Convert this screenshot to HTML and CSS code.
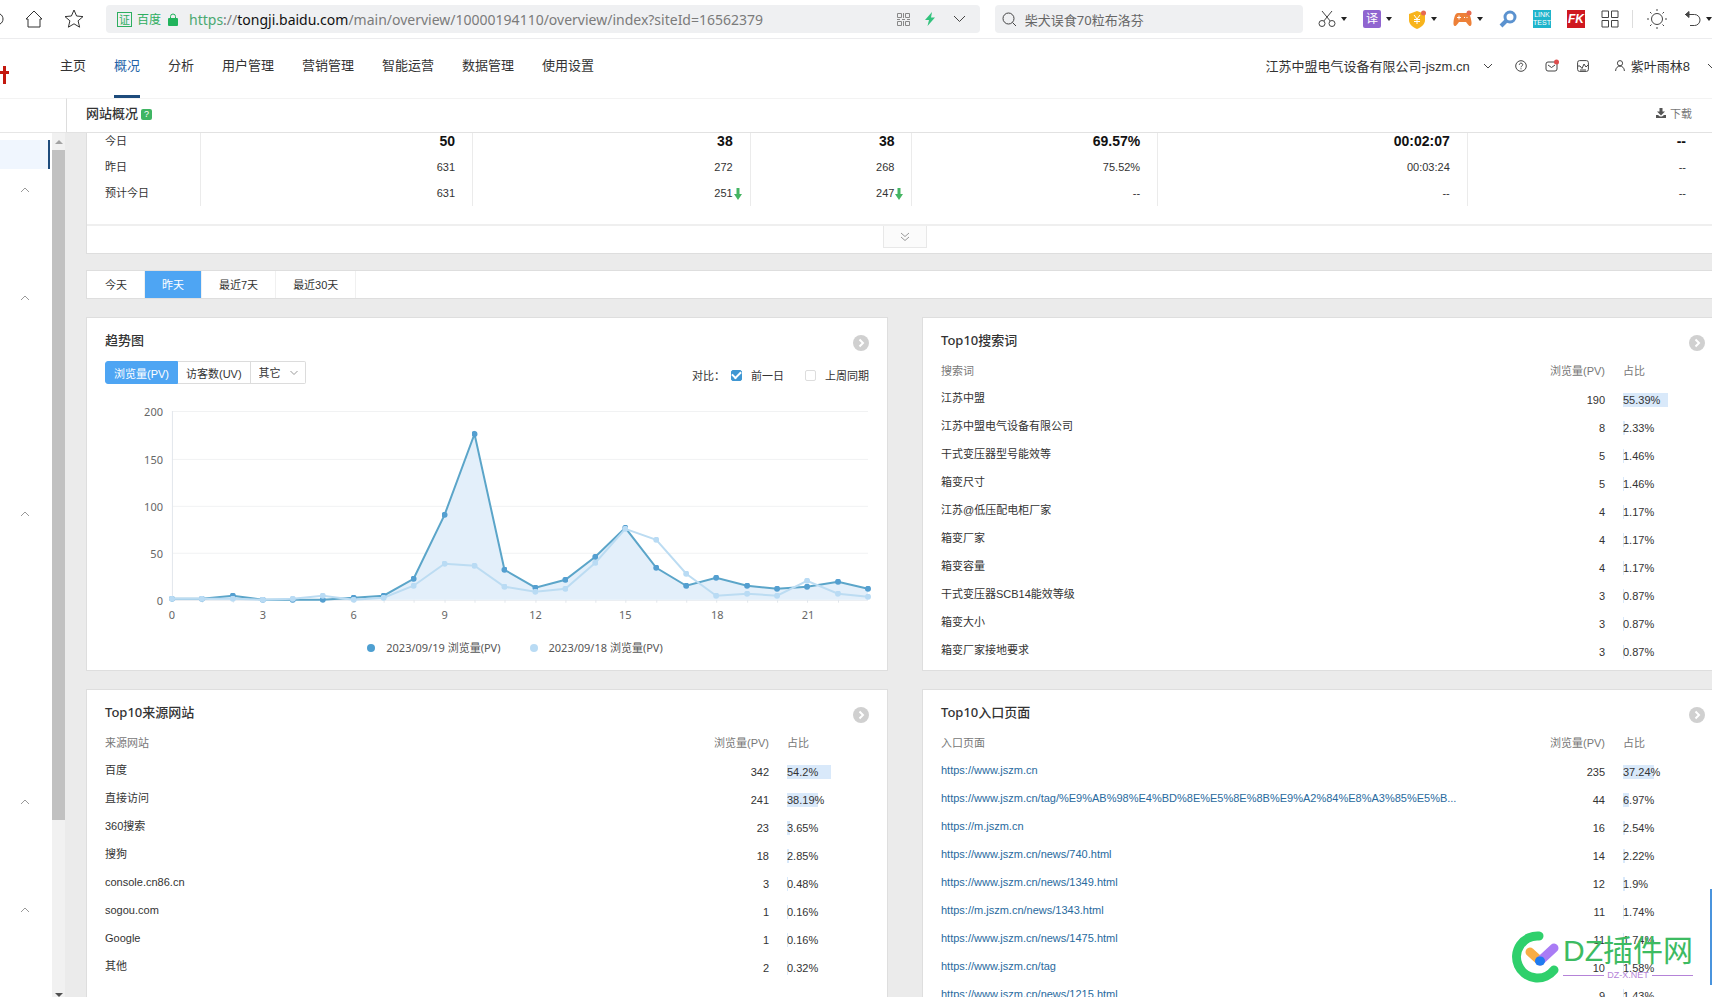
FILE: index.html
```html
<!DOCTYPE html>
<html lang="zh-CN">

<head>
    <meta charset="UTF-8">
    <meta name="viewport" content="width=device-width, initial-scale=1.0">
    <title>网站概况</title>
    <link rel="stylesheet" href="styles.css">
</head>

<body>
    <!-- Browser bar -->
    <div class="toolbar">
        <svg class="reload" width="4" height="18" viewBox="0 0 4 18"><path d="M0 4c2 1 3 3 3 5s-1 4-3 5" /></svg>
        <button class="icon-btn" aria-label="首页"><svg width="18" height="18" viewBox="0 0 18 18"><path d="M1 9L9 1l8 8h-2v8H3V9z" /></svg></button>
        <button class="icon-btn" aria-label="收藏"><svg width="20" height="20" viewBox="0 0 20 20"><path d="M10 1l2.600 6 6.400.6-4.900 4.200 1.500 6.400L10 14.800 4.400 18.200l1.500-6.400L1 7.600 7.400 7z" /></svg></button>
        <div class="address">
            <span class="cert">证</span>
            <span class="site">百度</span>
            <svg class="lock" width="10" height="13" viewBox="0 0 10 13"><rect y="5" width="10" height="8" rx="1" /><path d="M2.500 6V3.500a2.500 2.500 0 0 1 5 0V6" /></svg>
            <span class="url"><span class="scheme">https</span>://<b>tongji.baidu.com</b>/main/overview/10000194110/overview/index?siteId=16562379</span>
            <svg class="qr" width="13" height="13" viewBox="0 0 13 13"><path d="M.5.5h4v4h-4zM8.500.5h4v4h-4zM.5 8.500h4v4h-4zM8.500 8.500h4v4h-4zM6.500 0v5M6.500 8v5M0 6.500h3M5 6.500h3M10 6.500h3" /></svg>
            <svg class="bolt" width="10" height="14" viewBox="0 0 10 14"><path d="M7 0L0 8h4l-1.500 6L10 5.500H6z" /></svg>
            <svg class="line" width="13" height="8" viewBox="0 0 13 8"><path d="M1 1l5.500 5.500L12 1" /></svg>
        </div>
        <div class="search">
            <svg class="line" width="15" height="15" viewBox="0 0 15 15"><circle cx="6.500" cy="6.500" r="5.500" /><path d="M10.500 10.500L14 14" /></svg>
            <input type="text" value="柴犬误食70粒布洛芬" aria-label="搜索">
        </div>
        <div class="tools">
            <button class="tool" aria-label="截图"><svg class="line" width="18" height="18" viewBox="0 0 18 18"><circle cx="4" cy="13.500" r="3" /><circle cx="14" cy="13.500" r="3" /><path d="M4 1l8.200 10M14 1L5.800 11" /></svg><i class="caret"></i></button>
            <button class="tool" aria-label="翻译"><span class="translate">译</span><i class="caret"></i></button>
            <button class="tool" aria-label="钱包"><svg width="18" height="19" viewBox="0 0 18 19"><path fill="#f8b41c" d="M9 1l8 3v6c0 4-3 7-8 9-5-2-8-5-8-9V4z" /><path fill="none" stroke="#fff" d="M6 5l3 4 3-4M9 9v5M6 9.500h6M6 11.500h6" /><circle cx="15.500" cy="3" r="2.500" fill="#e66a50" /></svg><i class="caret"></i></button>
            <button class="tool" aria-label="游戏"><svg width="19" height="18" viewBox="0 0 19 18"><path fill="#ed8038" d="M5 3h9c3 0 4 5 4.500 9 .5 5-2 5-4 2l-1.500-2H6l-1.500 2c-2 3-4.500 3-4-2C1 8 2 3 5 3z" /><path stroke="#fff" d="M4 7.500h4M6 5.500v4M11 7.500h1M13.500 7.500h1" /><circle cx="16" cy="3" r="2.500" fill="#e66a50" /></svg><i class="caret"></i></button>
            <button class="tool" aria-label="查找"><svg width="18" height="18" viewBox="0 0 18 18"><g fill="none" stroke="#5b92cf"><circle cx="11" cy="7" r="5" stroke-width="3" /><path d="M7 11l-5 5" stroke-width="4" /></g></svg></button>
            <button class="tool" aria-label="LINK TEST"><span class="linktest">LINK<br>TEST</span></button>
            <button class="tool" aria-label="FK"><span class="fk">FK</span></button>
            <button class="tool" aria-label="应用"><svg class="line" width="18" height="18" viewBox="0 0 18 18"><path d="M1 1h6.500v6.500H1zM10.500 1H17v6.500h-6.500zM1 10.500h6.500V17H1zM10.500 10.500H17V17h-6.500z" /></svg></button>
            <i class="divider"></i>
            <button class="tool" aria-label="亮度"><svg class="line" width="22" height="20" viewBox="0 0 22 20"><circle cx="11" cy="10" r="5.500" /><path d="M11 0v2M11 18v2M1 10h2M19 10h2M4 3l1.500 1.500M16.500 15.500L18 17M18 3l-1.500 1.500M5.500 15.500L4 17" /></svg></button>
            <button class="tool" aria-label="撤销"><svg class="line" width="17" height="16" viewBox="0 0 17 16"><path d="M1 3.500h9.500a5.500 5.500 0 0 1 0 11H6" /><path fill="#444" d="M5 .5L1.500 3.500 5 6.500z" /></svg><i class="caret"></i></button>
        </div>
    </div>

    <!-- Site header -->
    <header class="header">
        <svg class="logo" width="9" height="20" viewBox="0 0 9 20"><path d="M4.500 1v18M0 7.500h9" /></svg>
        <nav class="nav">
            <a href="#">主页</a>
            <a href="#" class="active">概况</a>
            <a href="#">分析</a>
            <a href="#">用户管理</a>
            <a href="#">营销管理</a>
            <a href="#">智能运营</a>
            <a href="#">数据管理</a>
            <a href="#">使用设置</a>
        </nav>
        <div class="account">
            <button class="company">江苏中盟电气设备有限公司-jszm.cn
                <svg class="line" width="10" height="6" viewBox="0 0 10 6"><path d="M1 1l4 4 4-4" /></svg>
            </button>
            <button aria-label="帮助"><svg class="line" width="12" height="12" viewBox="0 0 12 12"><circle cx="6" cy="6" r="5.300" /><path d="M4.300 4.800c0-2.300 3.400-2.200 3.400-.1C7.700 6 6 6 6 7.300M6 8.300v1" /></svg></button>
            <button aria-label="消息"><svg class="line" width="14" height="14" viewBox="0 0 14 14"><rect x="1" y="3" width="11" height="9" rx="2" /><path d="M3 6l3.500 2.500L10 6" /><circle cx="11.500" cy="3" r="2.500" class="dot" /></svg></button>
            <button aria-label="报告"><svg class="line" width="12" height="12" viewBox="0 0 12 12"><rect x=".6" y=".6" width="10.800" height="10.800" rx="2" /><path d="M1 6h2l2 2.500L7 4l2 3 2-2M3 10h6" /></svg></button>
            <button class="user">
                <svg class="line" width="10" height="11" viewBox="0 0 10 11"><circle cx="5" cy="3.200" r="2.600" /><path d="M.6 11c0-6.500 8.800-6.500 8.800 0" /></svg>
                紫叶雨林8
            </button>
            <svg class="line" width="4" height="6" viewBox="0 0 4 6"><path d="M0 1l4 4" /></svg>
        </div>
    </header>

    <div class="layout">
        <aside class="sidebar">
            <div class="sidebar-top"></div>
            <div class="sidebar-body">
                <div class="menu">
                    <div class="menu-active"></div>
                    <button class="group items-2" aria-label="收起"><svg width="10" height="6" viewBox="0 0 10 6"><path d="M1 5l4-4 4 4" /></svg></button>
                    <button class="group items-5" aria-label="收起"><svg width="10" height="6" viewBox="0 0 10 6"><path d="M1 5l4-4 4 4" /></svg></button>
                    <button class="group items-7" aria-label="收起"><svg width="10" height="6" viewBox="0 0 10 6"><path d="M1 5l4-4 4 4" /></svg></button>
                    <button class="group items-2" aria-label="收起"><svg width="10" height="6" viewBox="0 0 10 6"><path d="M1 5l4-4 4 4" /></svg></button>
                    <button class="group" aria-label="收起"><svg width="10" height="6" viewBox="0 0 10 6"><path d="M1 5l4-4 4 4" /></svg></button>
                </div>
                <div class="scrollbar">
                    <i class="arrow-up"></i>
                    <div class="track"><div class="thumb"></div></div>
                    <i class="arrow-down"></i>
                </div>
            </div>
        </aside>

        <main class="main">
            <div class="page-head">
                <h1>网站概况</h1>
                <span class="help">?</span>
                <button class="download">
                    <svg width="10" height="10" viewBox="0 0 10 10"><path d="M3.500 0h3v3.500H9L5 7.500 1 3.500h2.500zM0 7h2l2 1.500h2L8 7h2v3H0z" /></svg>
                    下载
                </button>
            </div>

            <div class="content">
                <section class="card summary">
                    <table>
                        <colgroup>
                            <col class="c-label"><col class="c-pv"><col class="c-uv"><col class="c-ip"><col class="c-bounce"><col class="c-time"><col>
                        </colgroup>
                        <tr class="today">
                            <th>今日</th>
                            <td>50</td>
                            <td>38</td>
                            <td>38</td>
                            <td>69.57%</td>
                            <td>00:02:07</td>
                            <td>--</td>
                        </tr>
                        <tr>
                            <th>昨日</th>
                            <td>631</td>
                            <td>272</td>
                            <td>268</td>
                            <td>75.52%</td>
                            <td>00:03:24</td>
                            <td>--</td>
                        </tr>
                        <tr>
                            <th>预计今日</th>
                            <td>631</td>
                            <td class="down">251<svg width="8" height="12" viewBox="0 0 8 12"><path d="M2.500 0h3v6H8l-4 6-4-6h2.500z" /></svg></td>
                            <td class="down">247<svg width="8" height="12" viewBox="0 0 8 12"><path d="M2.500 0h3v6H8l-4 6-4-6h2.500z" /></svg></td>
                            <td>--</td>
                            <td>--</td>
                            <td>--</td>
                        </tr>
                    </table>
                    <div class="more">
                        <button aria-label="展开"><svg width="10" height="10" viewBox="0 0 10 10"><path d="M1 1l4 3.500L9 1M1 5l4 3.500L9 5" /></svg></button>
                    </div>
                </section>

                <div class="card range">
                    <button>今天</button>
                    <button class="active">昨天</button>
                    <button>最近7天</button>
                    <button>最近30天</button>
                </div>

                <div class="panels">
                    <section class="card panel">
                        <div class="panel-head">
                            <h2>趋势图</h2>
                            <a href="#" class="go" aria-label="更多"><svg width="16" height="16" viewBox="0 0 16 16"><circle cx="8" cy="8" r="8" /><path d="M6.500 4.500L10 8l-3.500 3.500" /></svg></a>
                        </div>
                        <div class="controls">
                            <div class="metrics">
                                <button class="active">浏览量(PV)</button>
                                <button>访客数(UV)</button>
                                <div class="select">
                                    <select aria-label="其它指标"><option>其它</option></select>
                                    <svg width="8" height="6" viewBox="0 0 8 6"><path d="M.5 1L4 4.500 7.500 1" /></svg>
                                </div>
                            </div>
                            <div class="compare">
                                <span>对比：</span>
                                <label><input type="checkbox" checked>前一日</label>
                                <label><input type="checkbox">上周同期</label>
                            </div>
                        </div>
                        <svg class="chart" viewBox="0 0 765 232">
                            <defs>
                                <marker id="dot-a" viewBox="0 0 6 6" refX="3" refY="3" markerWidth="6" markerHeight="6" markerUnits="userSpaceOnUse"><circle cx="3" cy="3" r="3" fill="#549fd0" /></marker>
                                <marker id="dot-b" viewBox="0 0 6 6" refX="3" refY="3" markerWidth="6" markerHeight="6" markerUnits="userSpaceOnUse"><circle cx="3" cy="3" r="3" fill="#b9dbf4" /></marker>
                            </defs>
                            <path class="grid" d="M67 20.500H764M67 68.500H764M67 115.500H764M67 162.500H764" />
                            <path class="axis" d="M67.500 20V209.500H764M97.500 209v3M128.500 209v3M158.500 209v3M188.500 209v3M218.500 209v3M249.500 209v3M279.500 209v3M309.500 209v3M340.500 209v3M370.500 209v3M400.500 209v3M431.500 209v3M461.500 209v3M491.500 209v3M521.500 209v3M552.500 209v3M582.500 209v3M612.500 209v3M643.500 209v3M673.500 209v3M703.500 209v3M734.500 209v3" />
                            <polygon class="area" points="67,209 67,208 97,208 128,205 158,209 188,209 218,209 249,207 279,205 309,188 340,124 370,43 400,179 431,197 461,189 491,166 521,137 552,177 582,195 612,187 643,195 673,198 703,196 734,191 764,198 764,209" />
                            <polyline class="series-a" points="67,208 97,208 128,205 158,209 188,209 218,209 249,207 279,205 309,188 340,124 370,43 400,179 431,197 461,189 491,166 521,137 552,177 582,195 612,187 643,195 673,198 703,196 734,191 764,198" />
                            <polyline class="series-b" points="67,208 97,208 128,208 158,209 188,208 218,205 249,209 279,207 309,195 340,173 370,175 400,196 431,201 461,198 491,172 521,138 552,149 582,183 612,205 643,203 673,205 703,190 734,203 764,206" />
                            <g class="y-labels">
                                <text x="58" y="25">200</text>
                                <text x="58" y="73">150</text>
                                <text x="58" y="120">100</text>
                                <text x="58" y="167">50</text>
                                <text x="58" y="214">0</text>
                            </g>
                            <g class="x-labels">
                                <text x="67" y="228">0</text>
                                <text x="158" y="228">3</text>
                                <text x="249" y="228">6</text>
                                <text x="340" y="228">9</text>
                                <text x="431" y="228">12</text>
                                <text x="521" y="228">15</text>
                                <text x="613" y="228">18</text>
                                <text x="704" y="228">21</text>
                            </g>
                        </svg>
                        <div class="legend">
                            <span class="key-a">2023/09/19 浏览量(PV)</span>
                            <span class="key-b">2023/09/18 浏览量(PV)</span>
                        </div>
                    </section>

                    <section class="card panel">
                        <div class="panel-head">
                            <h2>Top10搜索词</h2>
                            <a href="#" class="go" aria-label="更多"><svg width="16" height="16" viewBox="0 0 16 16"><circle cx="8" cy="8" r="8" /><path d="M6.500 4.500L10 8l-3.500 3.500" /></svg></a>
                        </div>
                        <table class="top">
                            <thead><tr><th>搜索词</th><th class="pv">浏览量(PV)</th><th class="rate">占比</th></tr></thead>
                            <tbody>
                                <tr><td>江苏中盟</td><td class="pv">190</td><td class="rate"><div class="bar" style="width:55.39%">55.39%</div></td></tr>
                                <tr><td>江苏中盟电气设备有限公司</td><td class="pv">8</td><td class="rate"><div class="bar" style="width:2.33%">2.33%</div></td></tr>
                                <tr><td>干式变压器型号能效等</td><td class="pv">5</td><td class="rate"><div class="bar" style="width:1.46%">1.46%</div></td></tr>
                                <tr><td>箱变尺寸</td><td class="pv">5</td><td class="rate"><div class="bar" style="width:1.46%">1.46%</div></td></tr>
                                <tr><td>江苏@低压配电柜厂家</td><td class="pv">4</td><td class="rate"><div class="bar" style="width:1.17%">1.17%</div></td></tr>
                                <tr><td>箱变厂家</td><td class="pv">4</td><td class="rate"><div class="bar" style="width:1.17%">1.17%</div></td></tr>
                                <tr><td>箱变容量</td><td class="pv">4</td><td class="rate"><div class="bar" style="width:1.17%">1.17%</div></td></tr>
                                <tr><td>干式变压器SCB14能效等级</td><td class="pv">3</td><td class="rate"><div class="bar" style="width:0.87%">0.87%</div></td></tr>
                                <tr><td>箱变大小</td><td class="pv">3</td><td class="rate"><div class="bar" style="width:0.87%">0.87%</div></td></tr>
                                <tr><td>箱变厂家接地要求</td><td class="pv">3</td><td class="rate"><div class="bar" style="width:0.87%">0.87%</div></td></tr>
                            </tbody>
                        </table>
                    </section>

                    <section class="card panel">
                        <div class="panel-head">
                            <h2>Top10来源网站</h2>
                            <a href="#" class="go" aria-label="更多"><svg width="16" height="16" viewBox="0 0 16 16"><circle cx="8" cy="8" r="8" /><path d="M6.500 4.500L10 8l-3.500 3.500" /></svg></a>
                        </div>
                        <table class="top">
                            <thead><tr><th>来源网站</th><th class="pv">浏览量(PV)</th><th class="rate">占比</th></tr></thead>
                            <tbody>
                                <tr><td>百度</td><td class="pv">342</td><td class="rate"><div class="bar" style="width:54.2%">54.2%</div></td></tr>
                                <tr><td>直接访问</td><td class="pv">241</td><td class="rate"><div class="bar" style="width:38.19%">38.19%</div></td></tr>
                                <tr><td>360搜索</td><td class="pv">23</td><td class="rate"><div class="bar" style="width:3.65%">3.65%</div></td></tr>
                                <tr><td>搜狗</td><td class="pv">18</td><td class="rate"><div class="bar" style="width:2.85%">2.85%</div></td></tr>
                                <tr><td>console.cn86.cn</td><td class="pv">3</td><td class="rate"><div class="bar" style="width:0.48%">0.48%</div></td></tr>
                                <tr><td>sogou.com</td><td class="pv">1</td><td class="rate"><div class="bar" style="width:0.16%">0.16%</div></td></tr>
                                <tr><td>Google</td><td class="pv">1</td><td class="rate"><div class="bar" style="width:0.16%">0.16%</div></td></tr>
                                <tr><td>其他</td><td class="pv">2</td><td class="rate"><div class="bar" style="width:0.32%">0.32%</div></td></tr>
                            </tbody>
                        </table>
                    </section>

                    <section class="card panel">
                        <div class="panel-head">
                            <h2>Top10入口页面</h2>
                            <a href="#" class="go" aria-label="更多"><svg width="16" height="16" viewBox="0 0 16 16"><circle cx="8" cy="8" r="8" /><path d="M6.500 4.500L10 8l-3.500 3.500" /></svg></a>
                        </div>
                        <table class="top">
                            <thead><tr><th>入口页面</th><th class="pv">浏览量(PV)</th><th class="rate">占比</th></tr></thead>
                            <tbody>
                                <tr><td><a href="#">https://www.jszm.cn</a></td><td class="pv">235</td><td class="rate"><div class="bar" style="width:37.24%">37.24%</div></td></tr>
                                <tr><td><a href="#">https://www.jszm.cn/tag/%E9%AB%98%E4%BD%8E%E5%8E%8B%E9%A2%84%E8%A3%85%E5%B...</a></td><td class="pv">44</td><td class="rate"><div class="bar" style="width:6.97%">6.97%</div></td></tr>
                                <tr><td><a href="#">https://m.jszm.cn</a></td><td class="pv">16</td><td class="rate"><div class="bar" style="width:2.54%">2.54%</div></td></tr>
                                <tr><td><a href="#">https://www.jszm.cn/news/740.html</a></td><td class="pv">14</td><td class="rate"><div class="bar" style="width:2.22%">2.22%</div></td></tr>
                                <tr><td><a href="#">https://www.jszm.cn/news/1349.html</a></td><td class="pv">12</td><td class="rate"><div class="bar" style="width:1.9%">1.9%</div></td></tr>
                                <tr><td><a href="#">https://m.jszm.cn/news/1343.html</a></td><td class="pv">11</td><td class="rate"><div class="bar" style="width:1.74%">1.74%</div></td></tr>
                                <tr><td><a href="#">https://www.jszm.cn/news/1475.html</a></td><td class="pv">11</td><td class="rate"><div class="bar" style="width:1.74%">1.74%</div></td></tr>
                                <tr><td><a href="#">https://www.jszm.cn/tag</a></td><td class="pv">10</td><td class="rate"><div class="bar" style="width:1.58%">1.58%</div></td></tr>
                                <tr><td><a href="#">https://www.jszm.cn/news/1215.html</a></td><td class="pv">9</td><td class="rate"><div class="bar" style="width:1.43%">1.43%</div></td></tr>
                            </tbody>
                        </table>
                    </section>
                </div>
            </div>
        </main>
    </div>

    <!-- Floating items -->
    <div class="side-tab"></div>
    <div class="watermark">
        <svg width="48" height="52" viewBox="0 0 48 52">
            <path d="M27 5A21 21 0 1 0 42 39" fill="none" stroke="#2fd06c" stroke-width="9" stroke-linecap="round" />
            <g fill="none" stroke-width="9" stroke-linecap="round">
                <path d="M18 21l10 9" stroke="#f8ad45" />
                <path d="M28 30l14-13" stroke="#a97cf5" />
                <path d="M27.500 30l1 0" stroke="#1f7bf0" />
            </g>
        </svg>
        <div class="watermark-text">
            <span class="watermark-name">DZ插件网</span>
            <span class="watermark-site">DZ-X.NET</span>
        </div>
    </div>
</body>

</html>
```
FILE: styles.css
```css
* {
    box-sizing: border-box;
}

body {
    margin: 0;
    height: 100vh;
    display: flex;
    flex-direction: column;
    overflow: hidden;
    position: relative;
    background: #fff;
    color: #333;
    font-family: "Liberation Sans", "Noto Sans CJK SC", sans-serif;
    font-size: 11px;
}

button, input, select {
    font: inherit;
    color: inherit;
    background: none;
    border: none;
    padding: 0;
    margin: 0;
}

a {
    color: inherit;
    text-decoration: none;
}

svg {
    display: block;
    flex: none;
}

.line {
    fill: none;
    stroke: #444;
}

/* Browser bar */
.toolbar {
    flex: none;
    display: flex;
    align-items: center;
    height: 39px;
    border-bottom: 1px solid #ececee;
}

.reload, .icon-btn svg {
    fill: none;
    stroke: #333;
}

.icon-btn {
    margin-left: 21px;
}

.address, .search {
    display: flex;
    align-items: center;
    height: 28px;
    background: #eff0f2;
    border-radius: 4px;
    font-family: "Noto Sans", "Noto Sans CJK SC", sans-serif;
    font-size: 13px;
}

.address {
    flex: 1;
    min-width: 0;
    margin: 0 15px 0 22px;
    padding: 0 14px 0 11px;
}

.cert {
    width: 15px;
    height: 15px;
    border: 1px solid #2dae5f;
    font-size: 11px;
    line-height: 13px;
    text-align: center;
    color: #2dae5f;
}

.site {
    margin: 0 7px 0 5px;
    font-size: 12px;
    color: #2dae5f;
}

.lock {
    fill: #21b35c;
}

.lock path {
    fill: none;
    stroke: #21b35c;
}

.url {
    flex: 1;
    min-width: 0;
    margin-left: 11px;
    overflow: hidden;
    white-space: nowrap;
    font-size: 14px;
    color: #7b7b7b;
}

.url b {
    font-weight: 400;
    color: #111;
}

.scheme {
    color: #4aa871;
}

.qr {
    fill: none;
    stroke: #888;
}

.bolt {
    margin: 0 18px 0 15px;
    fill: #32c27d;
}

.search {
    flex: 0 0 18%;
    padding: 0 7px;
    gap: 8px;
    color: #666;
}

.search input {
    flex: 1;
    min-width: 0;
}

.tools {
    flex: none;
    display: flex;
    align-items: center;
    gap: 16px;
    margin-left: 15px;
}

.tool {
    display: flex;
    align-items: center;
    gap: 5px;
}

.caret {
    border: 3px solid transparent;
    border-top: 4px solid #222;
    border-bottom: none;
}

.translate, .linktest, .fk {
    width: 18px;
    height: 18px;
    color: #fff;
    text-align: center;
}

.translate {
    border-radius: 2px;
    background: #9065d0;
    font-size: 12px;
    line-height: 18px;
}

.linktest {
    padding-top: 1px;
    background: #1fb4cb;
    font-size: 7px;
    line-height: 8px;
}

.fk {
    background: #cf1820;
    font-size: 12px;
    font-style: italic;
    font-weight: 700;
    line-height: 18px;
}

.divider {
    width: 1px;
    height: 18px;
    margin: 0 -3px;
    background: #ddd;
}

/* Site header */
.header {
    flex: none;
    display: flex;
    align-items: center;
    height: 59px;
    font-size: 13px;
}

.logo {
    margin-top: 12px;
    stroke: #c3190f;
    stroke-width: 3;
}

.nav {
    align-self: stretch;
    display: flex;
    gap: 28px;
    margin-left: 51px;
}

.nav a {
    padding-bottom: 1px;
    border-bottom: 3px solid transparent;
    line-height: 54px;
}

.nav .active {
    color: #2463a8;
    border-color: #1d4b7c;
}

.account {
    display: flex;
    align-items: center;
    gap: 18px;
    margin-left: auto;
    padding-bottom: 6px;
}

.account button {
    display: flex;
    align-items: center;
}

.account .company {
    gap: 13px;
    margin-right: 4px;
}

.account .user {
    gap: 6px;
    margin-left: 8px;
}

.account .dot {
    fill: #dd4c4c;
    stroke: none;
}

.layout {
    flex: 1;
    min-height: 0;
    display: flex;
}

/* Sidebar */
.sidebar {
    flex: none;
    width: 67px;
    display: flex;
    flex-direction: column;
    background: #fff;
}

.sidebar-top {
    height: 35px;
    border-top: 1px solid #f3f3f3;
    border-right: 1px solid #ddd;
    border-bottom: 1px solid #e6e6e6;
}

.sidebar-body {
    flex: 1;
    min-height: 0;
    display: flex;
    background: #ebebeb;
}

.menu {
    width: 52px;
    padding-top: 7px;
    overflow: hidden;
    background: #fff;
}

.menu-active {
    width: 50px;
    height: 29px;
    margin-bottom: 3px;
    background: #f0f6fe;
    border-right: 2px solid #1d4b7c;
}

.group {
    display: flex;
    align-items: center;
    justify-content: center;
    width: 50px;
    height: 36px;
}

.group svg {
    fill: none;
    stroke: #999;
}

/* Room for the folded-out items of a group */
.items-2 {
    margin-bottom: 72px;
}

.items-5 {
    margin-bottom: 180px;
}

.items-7 {
    margin-bottom: 252px;
}

.scrollbar {
    width: 13px;
    display: flex;
    flex-direction: column;
    align-items: center;
    background: #f1f1f1;
}

.track {
    flex: 1;
    width: 100%;
}

.thumb {
    height: 80%;
    background: #c1c1c1;
}

.arrow-up, .arrow-down {
    border: 4px solid transparent;
}

.arrow-up {
    margin: 7px 0 6px;
    border-top-width: 0;
    border-bottom: 4px solid #a3a3a3;
}

.arrow-down {
    margin-top: 6px;
    border-bottom-width: 0;
    border-top: 4px solid #505050;
}

/* Main area */
.main {
    flex: 1;
    min-width: 0;
    background: #ebebeb;
}

.page-head {
    display: flex;
    align-items: center;
    height: 35px;
    padding: 0 20px 6px 19px;
    background: #fff;
    border-top: 1px solid #f3f3f3;
    border-bottom: 1px solid #e2e2e2;
}

h1, h2 {
    margin: 0;
    font-family: "Noto Sans", "Noto Sans CJK SC", sans-serif;
    font-size: 13px;
    font-weight: 500;
    line-height: 20px;
}

.help {
    width: 11px;
    height: 11px;
    margin: 3px 0 0 3px;
    border-radius: 2px;
    background: #3fb563;
    color: #fff;
    font-size: 9px;
    line-height: 11px;
    text-align: center;
}

.download {
    display: flex;
    align-items: center;
    gap: 4px;
    margin-left: auto;
    color: #777;
}

.download svg {
    fill: #555;
}

/* The content runs a little past the right edge of the window */
.content {
    margin: 0 -12px 0 19px;
}

.card {
    background: #fff;
    border: 1px solid #dedede;
}

.summary {
    border-top: none;
}

.summary table {
    width: calc(100% - 38px);
    margin: 0 0 18px 18px;
    border-collapse: collapse;
    table-layout: fixed;
}

.c-label { width: 6%; }
.c-pv { width: 17%; }
.c-uv { width: 17.375%; }
.c-ip { width: 10.125%; }
.c-bounce { width: 15.375%; }
.c-time { width: 19.375%; }

.summary th, .summary td {
    height: 26px;
    padding: 0;
    border-right: 1px solid #ebebeb;
    line-height: 16px;
}

.summary th {
    font-weight: 400;
    text-align: left;
}

.summary td {
    padding-right: 17px;
    text-align: right;
}

.summary td:last-child {
    border-right: none;
}

.summary .today th, .summary .today td {
    height: 21px;
    padding-bottom: 5px;
}

.summary .today td {
    color: #111;
    font-size: 14px;
    font-weight: 700;
}

.summary .down {
    padding-right: 8px;
}

.down svg {
    display: inline-block;
    margin-left: 1px;
    vertical-align: -3px;
    fill: #45b563;
}

.more {
    display: flex;
    justify-content: center;
    height: 29px;
    border-top: 2px solid #efefef;
}

.more button {
    display: flex;
    align-items: center;
    justify-content: center;
    width: 44px;
    height: 22px;
    border: 1px solid #e8e8e8;
    border-top: none;
    background: #fbfbfb;
}

.more svg {
    fill: none;
    stroke: #999;
}

.range {
    display: flex;
    height: 29px;
    margin: 16px 0 18px;
    padding-left: 1px;
}

.range button {
    padding: 0 17px 2px;
    border-right: 1px solid #f0f0f0;
}

.range .active {
    background: #4ea5f3;
    color: #fff;
}

.panels {
    display: grid;
    grid-template-columns: 1fr 1fr;
    gap: 18px 34px;
}

.panel {
    min-width: 0;
    height: 354px;
    padding: 12px 18px 0;
}

.panel-head {
    display: flex;
    justify-content: space-between;
    height: 27px;
}

.go {
    padding-top: 5px;
}

.go circle {
    fill: #d0d0d0;
}

.go path {
    fill: none;
    stroke: #fff;
    stroke-width: 2;
}

/* Trend chart */
.controls {
    display: flex;
    justify-content: space-between;
    padding-top: 4px;
}

.metrics {
    display: flex;
    height: 23px;
}

.metrics button, .select {
    border: 1px solid #dcdcdc;
    border-left: none;
}

.metrics button {
    padding: 0 8px;
}

.metrics .active {
    border: 1px solid #4ea5f3;
    border-radius: 3px 0 0 3px;
    background: #4ea5f3;
    color: #fff;
}

.select {
    position: relative;
    border-radius: 0 2px 2px 0;
}

.select select {
    width: 54px;
    height: 21px;
    padding-left: 8px;
    appearance: none;
}

.select svg {
    position: absolute;
    right: 7px;
    top: 8px;
    fill: none;
    stroke: #999;
    pointer-events: none;
}

.compare {
    display: flex;
    align-items: center;
    padding-top: 5px;
}

.compare label {
    display: flex;
    align-items: center;
    margin-left: 21px;
}

.compare span + label {
    margin-left: 6px;
}

.compare input {
    display: grid;
    place-content: center;
    width: 11px;
    height: 11px;
    margin-right: 9px;
    border: 1px solid #ddd;
    border-radius: 2px;
    appearance: none;
}

.compare input:checked {
    border-color: #3f97d3;
    background: #3f97d3;
}

.compare input:checked::after {
    content: "";
    width: 7px;
    height: 4px;
    margin-bottom: 2px;
    border: solid #fff;
    border-width: 0 0 2px 2px;
    transform: rotate(-45deg);
}

.chart {
    width: 100%;
    margin-top: 7px;
    overflow: visible;
    font-family: "Noto Sans", sans-serif;
}

.chart text {
    fill: #666;
}

.grid {
    fill: none;
    stroke: #f1f2f3;
}

.axis {
    fill: none;
    stroke: #e2e7ec;
}

.area {
    fill: #e3effa;
}

.series-a, .series-b {
    fill: none;
    stroke-width: 2;
}

.series-a {
    stroke: #5ba5c9;
    marker: url(#dot-a);
}

.series-b {
    stroke: #bcdcf2;
    marker: url(#dot-b);
}

.y-labels {
    text-anchor: end;
}

.x-labels {
    text-anchor: middle;
}

.legend {
    display: flex;
    justify-content: center;
    gap: 29px;
    padding: 17px 0 0 56px;
    color: #555;
    font-family: "Noto Sans", "Noto Sans CJK SC", sans-serif;
    line-height: 16px;
}

.legend span {
    display: flex;
    align-items: center;
    gap: 11px;
}

.legend span::before {
    content: "";
    width: 8px;
    height: 8px;
    border-radius: 50%;
}

.legend .key-a::before {
    background: #4e9fd1;
}

.legend .key-b::before {
    background: #b9dbf4;
}

/* Top 10 tables */
.top {
    width: 100%;
    border-collapse: collapse;
    table-layout: fixed;
    line-height: 14px;
}

.top th {
    height: 27px;
    padding: 0;
    color: #777;
    font-weight: 400;
    text-align: left;
}

.top td {
    height: 28px;
    padding: 0 0 1px;
    white-space: nowrap;
}

.top .pv {
    width: 100px;
    text-align: right;
}

.top .rate {
    width: 100px;
    padding-left: 18px;
}

.top td.pv, .top td.rate {
    padding-top: 3px;
    padding-bottom: 0;
}

.top a {
    color: #286a9e;
}

.bar {
    background: #d9e9fa;
}

/* Floating items */
.side-tab {
    position: absolute;
    right: 0;
    bottom: 12px;
    width: 2px;
    height: 96px;
    background: #4a94dd;
}

.watermark {
    position: absolute;
    right: 19px;
    bottom: 14px;
    display: flex;
    gap: 3px;
}

.watermark-text {
    display: flex;
    flex-direction: column;
}

.watermark-name {
    color: #3dbb62;
    font-size: 30px;
    line-height: 39px;
}

.watermark-site {
    display: flex;
    align-items: center;
    gap: 3px;
    color: #b583d8;
    font-size: 9px;
    line-height: 10px;
}

.watermark-site::before, .watermark-site::after {
    content: "";
    flex: 1;
    height: 1px;
    background: #b583d8;
}
```
